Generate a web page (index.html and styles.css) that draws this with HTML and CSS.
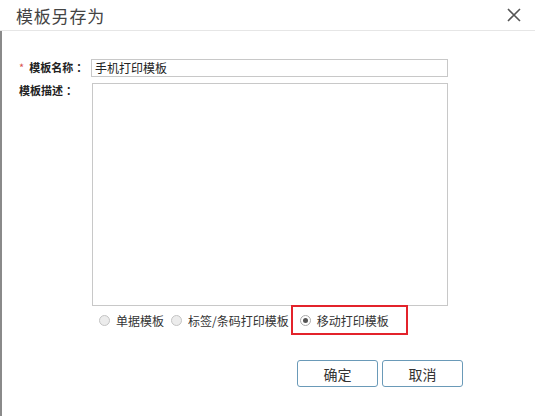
FILE: index.html
```html
<!DOCTYPE html>
<html lang="zh-CN">
<head>
<meta charset="utf-8">
<link rel="stylesheet" href="styles.css">
</head>
<body>
<div class="dialog">
  <div class="titlebar">
    <span class="title">模板另存为</span>
    <span class="close">
      <svg width="14" height="14" viewBox="0 0 14 14"><path d="M1 1L13 13M13 1L1 13" stroke="#555" stroke-width="1.6" fill="none"/></svg>
    </span>
  </div>
  <div class="body">
    <div class="row name-row">
      <label class="label"><span class="star">*</span>模板名称<span class="colon">：</span></label>
      <div class="input">手机打印模板</div>
    </div>
    <div class="row desc-row">
      <label class="label plain">模板描述<span class="colon">：</span></label>
      <div class="textarea"></div>
    </div>
    <div class="radios">
      <span class="radio"><span class="dot"></span>单据模板</span>
      <span class="radio"><span class="dot"></span>标签/条码打印模板</span>
      <span class="radio selected"><span class="dot"></span>移动打印模板</span>
    </div>
    <div class="buttons">
      <button class="btn">确定</button>
      <button class="btn">取消</button>
    </div>
  </div>
</div>
</body>
</html>
```
FILE: styles.css
```css
* { box-sizing: border-box; }
html, body { margin: 0; padding: 0; background: #fff; }
body {
  font-family: "Noto Sans CJK SC", "Noto Sans", "Liberation Sans", sans-serif;
  width: 535px;
  height: 416px;
  overflow: hidden;
}
.dialog { width: 535px; height: 416px; display: flex; flex-direction: column; }
.titlebar {
  height: 31px;
  border-bottom: 1px solid #e6e6e6;
  display: flex;
  align-items: center;
  justify-content: space-between;
  padding: 0 14px 0 16px;
}
.title { font-size: 17px; color: #444; letter-spacing: 0.8px; line-height: 1; }
.close { display: flex; width: 14px; height: 14px; }
.body {
  flex: 1;
  border-left: 2px solid #8a8a8a;
  display: flex;
  flex-direction: column;
  padding-top: 28px;
}
.row { display: flex; }
.label {
  width: 89px;
  font-size: 11px;
  font-weight: bold;
  color: #222;
  line-height: 17px;
  padding-left: 17px;
  white-space: nowrap;
}
.star { color: #d9534f; font-weight: normal; margin-right: 5px; }
.colon { margin-left: 3px; }
.name-row { height: 18px; }
.input {
  width: 357px;
  height: 18px;
  border: 1px solid #c8c8c8;
  font-size: 12px;
  line-height: 16px;
  padding-left: 3px;
  color: #222;
}
.desc-row { margin-top: 6px; }
.desc-row .label { line-height: 14px; }
.textarea {
  width: 356px;
  height: 223px;
  border: 1px solid #c8c8c8;
  margin-left: 1px;
}
.radios {
  display: flex;
  align-items: center;
  margin-left: 97px;
  height: 20px;
  margin-top: 4px;
  font-size: 12px;
  color: #333;
}
.radio { display: flex; align-items: center; margin-right: 7px; line-height: 17px; }
.dot {
  width: 11px;
  height: 11px;
  border-radius: 50%;
  border: 1px solid #c4c4c4;
  background: #ececec;
  margin-right: 6px;
  position: relative;
}
.radio.selected {
  border: 2px solid #e3232b;
  height: 30px;
  padding: 0 17px 0 7px;
  margin-left: -5px;
}
.radio.selected .dot { background: #fff; border-color: #aaa; }
.radio.selected .dot::after {
  content: "";
  position: absolute;
  left: 2px; top: 2px;
  width: 5px; height: 5px;
  border-radius: 50%;
  background: #555;
}
.buttons {
  display: flex;
  gap: 4px;
  margin-left: 295px;
  margin-top: 30px;
}
.btn {
  width: 81px;
  height: 27px;
  border: 1px solid #6a9ab8;
  border-radius: 3px;
  background: #fff;
  font-family: inherit;
  font-size: 14px;
  color: #333;
  padding: 0;
}
```
